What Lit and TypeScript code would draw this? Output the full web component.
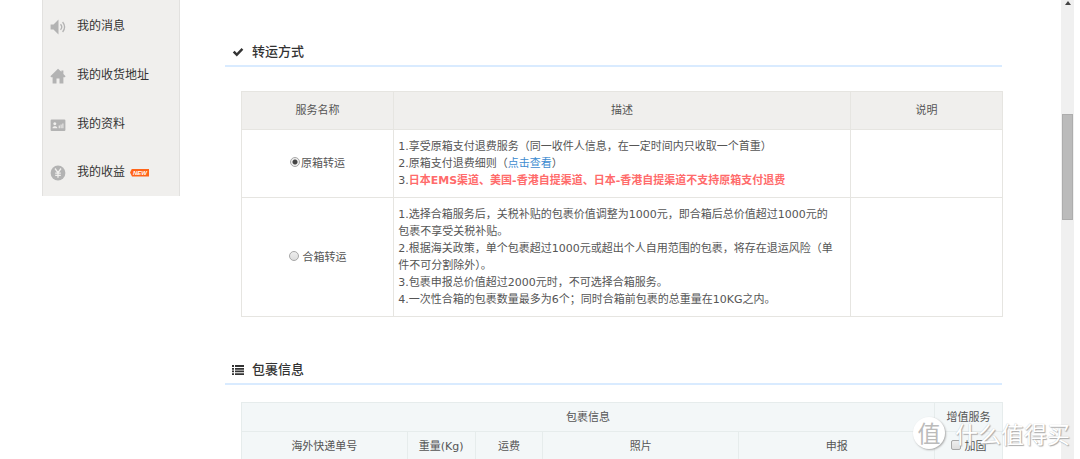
import { LitElement, html, css, svg } from "lit";
import { customElement, state } from "lit/decorators.js";

const speaker = svg`<path d="M.6 5.500h2.900L8.500 .6v14.800L3.500 10.500H.6z"/><path d="M10.500 5.200q2.600 2.800 0 5.600M12.600 3q4 5 0 10" fill="none" stroke="currentColor" stroke-width="1.300"/>`;
const house = svg`<path d="M8 .8 .4 8.200l.8 1H2.600v6.200h3.900V10.500h3v4.900h3.900V9.200h1.400l.8-1-2.200-2.200V2.400h-2v1.400z"/>`;
const card = svg`<path fill-rule="evenodd" d="M1.600 2.500h12.800a1 1 0 0 1 1 1v9.600a1 1 0 0 1-1 1H1.600a1 1 0 0 1-1-1V3.500a1 1 0 0 1 1-1zM4.800 5.200a1.500 1.500 0 1 0 .01 0zM2.500 11.300h4.800c0-2.600-4.800-2.600-4.800 0zM8.700 8.600v2.700h1.100V8.600zM10.600 7.600v3.700h1V7.600zM12.400 6.600v4.700h1V6.600z"/>`;
const yen = svg`<circle cx="8" cy="8" r="7.400"/><path d="M5 3.500 8 7.600l3-4.100M8 7.600v5.200M5.200 8.200h5.600M5.200 10.400h5.600" fill="none" stroke="#f0efed" stroke-width="1.300"/>`;

@customElement("app-root")
export class AppRoot extends LitElement {
  @state() private mode = "original";

  private menu = [
    { label: "我的消息", icon: speaker, fresh: false },
    { label: "我的收货地址", icon: house, fresh: false },
    { label: "我的资料", icon: card, fresh: false },
    { label: "我的收益", icon: yen, fresh: true },
  ];

  static styles = css`
    :host {
      display: flex;
      align-items: flex-start;
      position: relative;
      height: 100vh;
      overflow: hidden;
      box-sizing: border-box;
      padding: 0 6px 0 42px;
      background: #fff;
      color: #555;
      font: 11px/17px "DejaVu Sans", "Noto Sans CJK SC", sans-serif;
    }
    .side {
      flex: none;
      width: 138px;
      box-sizing: border-box;
      background: #f0efed;
      border: solid #e2e1df;
      border-width: 0 1px;
      padding-top: 2px;
    }
    .side a {
      display: flex;
      align-items: center;
      height: 49px;
      padding-left: 7px;
      color: #333;
      font-size: 12px;
      text-decoration: none;
    }
    .side a:last-child { height: 47px; }
    .side a svg {
      flex: none;
      width: 16px;
      height: 16px;
      margin-right: 11px;
      color: #b3b3b3;
      fill: currentColor;
    }
    .new {
      margin-left: 5px;
      padding: 0 2px 0 3px;
      background: #ff6519;
      color: #fff;
      font: italic bold 6px/8px "Liberation Sans", sans-serif;
      clip-path: polygon(0 50%, 2px 0, 100% 0, 100% 100%, 2px 100%);
    }
    main {
      flex: 1;
      min-width: 0;
      padding: 38px 59px 0 45px;
    }
    h2 {
      display: flex;
      align-items: center;
      gap: 8px;
      margin: 0;
      height: 27px;
      padding-left: 7px;
      border-bottom: 2px solid #d9ebff;
      color: #333;
      font-size: 13px;
      font-weight: 500;
    }
    h2 svg { width: 12px; height: 12px; fill: #333; }
    table {
      width: calc(100% - 15px);
      border-collapse: collapse;
      table-layout: fixed;
    }
    th, td {
      box-sizing: border-box;
      border: 1px solid #e6e5e1;
      font-weight: normal;
      text-align: center;
    }
    .modes { margin: 24px 0 39px 16px; }
    .modes th { height: 38px; padding: 0; background: #f0efed; }
    .modes td { padding: 8px 4px; }
    .modes .text { text-align: left; }
    .goods { margin: 17px 0 0 16px; }
    .goods th {
      height: 29px;
      padding: 0;
      background: #f3f7f8;
      border-color: #e6ecec;
    }
    .w9 { width: 9%; }
    .w20 { width: 20%; }
    .w22 { width: 22%; }
    .w26 { width: 26%; }
    .w60 { width: 60%; }
    .red { color: #ff6b6b; font-weight: bold; }
    .text a { color: #3d8bd0; text-decoration: none; }
    label { display: inline-flex; align-items: center; gap: 1px; }
    label.wide { gap: 4px; }
    input {
      appearance: none;
      flex: none;
      width: 10px;
      height: 10px;
      margin: 0 0 3px;
      border: 1px solid #a8a8a8;
      background: linear-gradient(#eee, #ddd);
    }
    input[type="radio"] { border-radius: 50%; }
    input[type="radio"]:checked { background: radial-gradient(circle, #444 0 2px, #eee 3px); }
    input[type="checkbox"] { border-radius: 2px; }
    .bar {
      flex: none;
      align-self: stretch;
      display: flex;
      flex-direction: column;
      align-items: center;
      width: 13px;
      background: #f0f0f0;
    }
    .bar svg { width: 6px; height: 4px; margin-top: 1px; fill: #444; }
    .thumb {
      box-sizing: border-box;
      width: 11px;
      height: 23%;
      margin-top: 109px;
      background: #bbb;
      border: 1px solid #adadad;
    }
    .mark {
      position: absolute;
      right: 10px;
      bottom: 10px;
      display: flex;
      align-items: center;
      gap: 10px;
      color: #fff;
      font: 23px/32px "Noto Sans CJK SC", sans-serif;
      text-shadow: 1px 1px 1px #aaa, 0 0 1px #bbb;
      pointer-events: none;
    }
    .disc {
      width: 32px;
      height: 32px;
      border-radius: 50%;
      background: #fff;
      box-shadow: 1px 1px 2px #aaa;
      color: #bbb;
      line-height: 30px;
      text-align: center;
      text-shadow: none;
    }
  `;

  private pick(value: string) {
    this.mode = value;
  }

  render() {
    return html`
      <nav class="side">
        ${this.menu.map(
          (m) => html`<a href="#"><svg viewBox="0 0 16 16" aria-hidden="true">${m.icon}</svg>${m.label}${m.fresh ? html`<span class="new">NEW</span>` : ""}</a>`
        )}
      </nav>
      <main>
        <h2><svg viewBox="0 0 12 12" aria-hidden="true"><path d="M.8 6.500 2.600 4.700l2.200 2.200 4.800-4.800 1.700 1.700L4.800 10.400z"/></svg>转运方式</h2>
        <table class="modes">
          <thead>
            <tr><th class="w20">服务名称</th><th class="w60">描述</th><th class="w20">说明</th></tr>
          </thead>
          <tbody>
            <tr>
              <td><label><input type="radio" name="mode" .checked=${this.mode === "original"} @change=${() => this.pick("original")}>原箱转运</label></td>
              <td class="text">
                1.享受原箱支付退费服务（同一收件人信息，在一定时间内只收取一个首重）<br>
                2.原箱支付退费细则（<a href="#">点击查看</a>）<br>
                3.<span class="red">日本EMS渠道、美国-香港自提渠道、日本-香港自提渠道不支持原箱支付退费</span>
              </td>
              <td></td>
            </tr>
            <tr>
              <td><label class="wide"><input type="radio" name="mode" .checked=${this.mode === "merged"} @change=${() => this.pick("merged")}>合箱转运</label></td>
              <td class="text">
                1.选择合箱服务后，关税补贴的包裹价值调整为1000元，即合箱后总价值超过1000元的<br>包裹不享受关税补贴。<br>
                2.根据海关政策，单个包裹超过1000元或超出个人自用范围的包裹，将存在退运风险（单<br>件不可分割除外）。<br>
                3.包裹申报总价值超过2000元时，不可选择合箱服务。<br>
                4.一次性合箱的包裹数量最多为6个；同时合箱前包裹的总重量在10KG之内。
              </td>
              <td></td>
            </tr>
          </tbody>
        </table>
        <h2><svg viewBox="0 0 12 12" aria-hidden="true"><path d="M0 1h2v2H0zM3 1h9v2H3zM0 4h2v1.700H0zM3 4h9v1.700H3zM0 6.600h2v1.700H0zM3 6.600h9v1.700H3zM0 9.200h2v1.800H0zM3 9.200h9v1.800H3z"/></svg>包裹信息</h2>
        <table class="goods">
          <colgroup><col class="w22"><col class="w9"><col class="w9"><col class="w26"><col class="w26"><col class="w9"></colgroup>
          <thead>
            <tr><th colspan="5">包裹信息</th><th>增值服务</th></tr>
            <tr>
              <th>海外快递单号</th><th>重量(Kg)</th><th>运费</th><th>照片</th><th>申报</th>
              <th><label class="wide"><input type="checkbox">加固</label></th>
            </tr>
          </thead>
        </table>
      </main>
      <div class="bar" aria-hidden="true"><svg viewBox="0 0 6 4"><path d="M0 4 3 0l3 4z"/></svg><div class="thumb"></div></div>
      <div class="mark" aria-hidden="true"><span class="disc">值</span><span>什么值得买</span></div>
    `;
  }
}
